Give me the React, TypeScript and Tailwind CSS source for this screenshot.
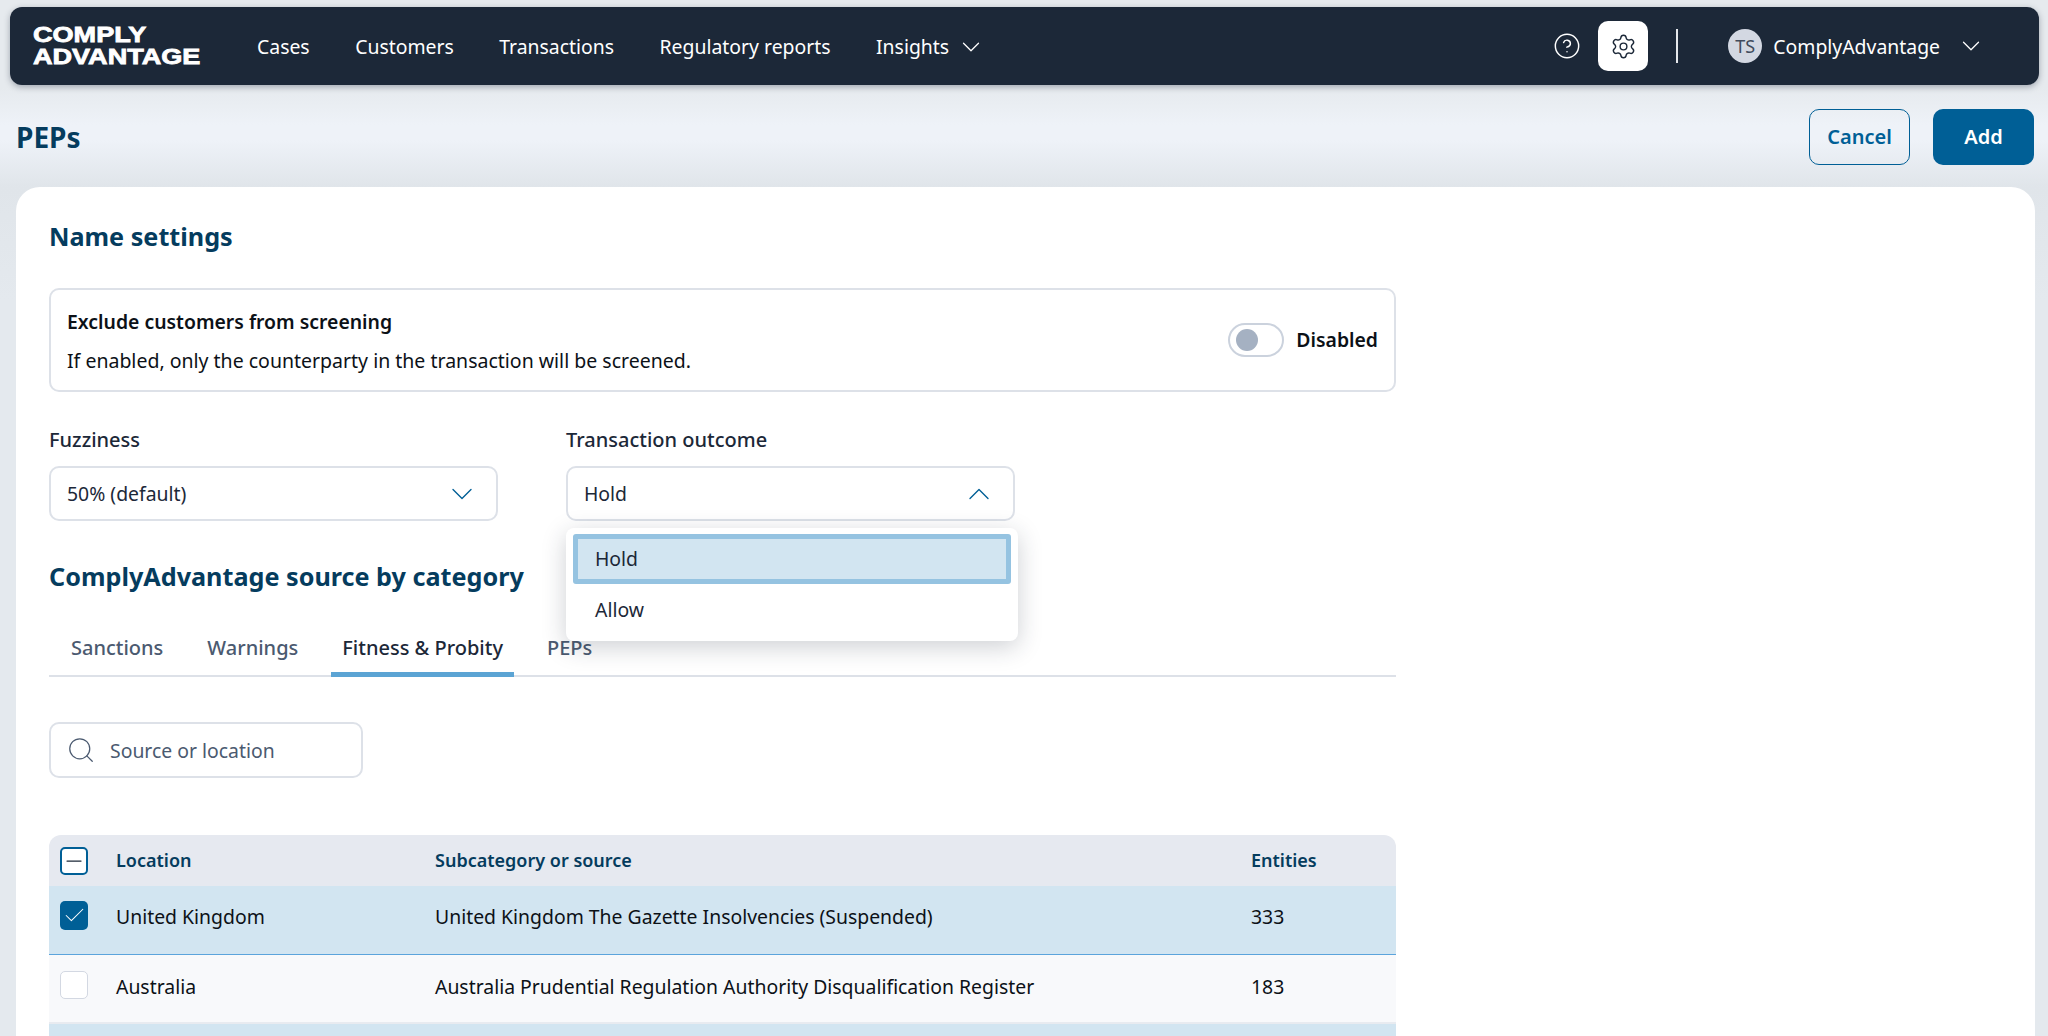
import { ChevronDown, ChevronUp, Check, CircleHelp, Minus, Search, Settings } from "lucide-react";

const navItems = ["Cases", "Customers", "Transactions", "Regulatory reports"];
const tabs = ["Sanctions", "Warnings", "Fitness & Probity", "PEPs"];

function TableRow({
  location,
  source,
  entities,
  selected,
}: {
  location: string;
  source: string;
  entities: string;
  selected?: boolean;
}) {
  return (
    <div
      className={
        selected
          ? "flex h-[69px] items-start border-b border-[#5ba4dc] bg-[#d2e5f1] pt-[15px]"
          : "flex h-[69px] items-start border-b-2 border-[#e8ebf0] bg-[#f8f9fb] pt-[16px]"
      }
    >
      <div className="w-[67px] shrink-0 pl-[11px]">
        {selected ? (
          <span className="flex h-[29px] w-[28px] items-center justify-center rounded-[5px] bg-[#005f96]">
            <Check className="h-[25px] w-[25px] text-white" strokeWidth={1} />
          </span>
        ) : (
          <span className="block h-[28px] w-[28px] rounded-[5px] border border-[#d3d8e2] bg-white" />
        )}
      </div>
      <div className="w-[319px] shrink-0 leading-[32px]">{location}</div>
      <div className="w-[816px] shrink-0 leading-[32px]">{source}</div>
      <div className="leading-[32px]">{entities}</div>
    </div>
  );
}

export default function App() {
  return (
    <div className="h-[1036px] overflow-hidden bg-[linear-gradient(180deg,#e6eaee_0px,#e6eaee_88px,#eef2f8_125px,#eef2f8_140px,#e0e5ea_187px,#e4e9ee_300px)] font-['Noto_Sans',sans-serif] text-[19.4px] text-[#0c1117]">
      <div className="pl-[10px] pr-[9px] pt-[7px]">
        <nav className="flex h-[78px] items-center rounded-[12px] bg-[#1c2838] pl-[23px] pr-[53px] text-white shadow-[0_2px_6px_rgba(30,41,59,0.35)]">
          <div className="w-[224px] origin-left scale-x-[1.23] font-['Liberation_Sans',sans-serif] text-[22px] font-bold leading-[22px] [-webkit-text-stroke:0.8px_white]">
            <div>COMPLY</div>
            <div>ADVANTAGE</div>
          </div>
          <div className="flex items-center gap-[45.5px] pt-[1px]">
            {navItems.map((item) => (
              <span key={item}>{item}</span>
            ))}
            <span className="flex items-center gap-[7px]">
              Insights
              <ChevronDown className="h-[30px] w-[30px]" strokeWidth={1} />
            </span>
          </div>
          <div className="ml-auto flex items-center">
            <CircleHelp className="h-[28px] w-[28px]" strokeWidth={1.25} />
            <span className="ml-[17px] flex h-[50px] w-[50px] items-center justify-center rounded-[10px] bg-white text-[#1c2838]">
              <Settings className="h-[27px] w-[27px]" strokeWidth={1.25} />
            </span>
            <span className="ml-[28px] h-[34px] w-[2px] bg-[#e5e7eb]" />
            <span className="ml-[50px] flex h-[34px] w-[34px] items-center justify-center rounded-full bg-[#d3d8e2] text-[18px] text-[#404b5c]">
              TS
            </span>
            <span className="ml-[11px] pt-[1px]">ComplyAdvantage</span>
            <ChevronDown className="ml-[16px] h-[30px] w-[30px]" strokeWidth={1} />
          </div>
        </nav>
      </div>

      <div className="flex h-[102px] items-center justify-between pl-[16px] pr-[14px] pt-[2px]">
        <h1 className="text-[28px] font-bold text-[#053c5e]">PEPs</h1>
        <div className="flex gap-[23px] text-[20px] font-semibold">
          <button className="h-[56px] w-[101px] rounded-[10px] border-[1.5px] border-[#005f96] text-[#005f96]">Cancel</button>
          <button className="h-[56px] w-[101px] rounded-[10px] bg-[#005f96] text-white">Add</button>
        </div>
      </div>

      <main className="mx-[16px] mr-[13px] h-[900px] rounded-t-[24px] bg-white px-[33px] pt-[31px]">
        <div className="w-[1347px]">
          <h2 className="text-[25.2px] font-bold leading-[36px] text-[#053c5e]">Name settings</h2>

          <section className="mt-[34px] flex h-[104px] items-center justify-between rounded-[10px] border-2 border-[#dde1e8] pl-[16px] pr-[16px]">
            <div className="pt-[2px]">
              <div className="font-semibold leading-[28px]">Exclude customers from screening</div>
              <div className="mt-[11px] text-[19.5px] leading-[28px]">If enabled, only the counterparty in the transaction will be screened.</div>
            </div>
            <div className="flex items-center gap-[12px]">
              <span className="flex h-[34px] w-[56px] items-center rounded-full border-2 border-[#cbd2dd] bg-white pl-[6px]">
                <span className="h-[22px] w-[22px] rounded-full bg-[#a5b1c2]" />
              </span>
              <span className="font-semibold">Disabled</span>
            </div>
          </section>

          <div className="mt-[34px] flex gap-[68px]">
            <div className="w-[449px]">
              <label className="block text-[20px] font-medium leading-[28px] text-[#1c2838]">Fuzziness</label>
              <div className="mt-[12px] flex h-[55px] items-center justify-between rounded-[10px] border-2 border-[#dde1e8] pl-[16px] pr-[16px] text-[#1c2838]">
                50% (default)
                <ChevronDown className="h-[36px] w-[36px] text-[#005f96]" strokeWidth={0.9} />
              </div>
            </div>
            <div className="relative w-[449px]">
              <label className="block text-[20px] font-medium leading-[28px] text-[#1c2838]">Transaction outcome</label>
              <div className="mt-[12px] flex h-[55px] items-center justify-between rounded-[10px] border-2 border-[#dde1e8] pl-[16px] pr-[16px] text-[#1c2838]">
                Hold
                <ChevronUp className="h-[36px] w-[36px] text-[#005f96]" strokeWidth={0.9} />
              </div>
              <div className="absolute left-0 top-[102px] z-10 h-[113px] w-[452px] rounded-[8px] bg-white px-[7px] pt-[6px] text-[#1c2838] shadow-[0_6px_24px_rgba(30,41,59,0.22)]">
                <div className="flex h-[50px] items-center rounded-[3px] border-[5px] border-[#95c3e1] bg-[#d2e5f1] pl-[17px]">Hold</div>
                <div className="flex h-[52px] items-center pl-[22px]">Allow</div>
              </div>
            </div>
          </div>

          <h2 className="mt-[37px] text-[25.2px] font-bold leading-[36px] text-[#053c5e]">ComplyAdvantage source by category</h2>

          <div className="mt-[32px] flex h-[51px] gap-[22px] border-b-2 border-[#dde1e8] pl-[11px] text-[20px] font-medium text-[#4b5a70]">
            {tabs.map((tab) => (
              <div
                key={tab}
                className={
                  tab === "Fitness & Probity"
                    ? "-mb-[2px] h-[51px] border-b-[5px] border-[#5ba4d4] px-[11px] pt-[7px] text-[#1c2838]"
                    : "px-[11px] pt-[7px]"
                }
              >
                {tab}
              </div>
            ))}
          </div>

          <div className="mt-[45px] flex h-[56px] w-[314px] items-center gap-[14px] rounded-[10px] border-2 border-[#dde1e8] pl-[15px] text-[#4b5a70]">
            <Search className="h-[30px] w-[30px]" strokeWidth={1} />
            <span className="pt-[1px]">Source or location</span>
          </div>

          <div className="mt-[57px] overflow-hidden rounded-t-[12px]">
            <div className="flex h-[51px] items-center bg-[#e6e9f0] text-[18px] font-semibold text-[#053c5e]">
              <div className="w-[67px] shrink-0 pl-[11px]">
                <span className="flex h-[28px] w-[28px] items-center justify-center rounded-[5px] border-2 border-[#005f96] bg-white">
                  <Minus className="h-[24px] w-[24px] shrink-0 text-[#1c2838]" strokeWidth={1.25} />
                </span>
              </div>
              <div className="w-[319px] shrink-0">Location</div>
              <div className="w-[816px] shrink-0">Subcategory or source</div>
              <div>Entities</div>
            </div>
            <TableRow
              selected
              location="United Kingdom"
              source="United Kingdom The Gazette Insolvencies (Suspended)"
              entities="333"
            />
            <TableRow
              location="Australia"
              source="Australia Prudential Regulation Authority Disqualification Register"
              entities="183"
            />
            <div className="h-[40px] bg-[#d2e5f1]" />
          </div>
        </div>
      </main>
    </div>
  );
}
